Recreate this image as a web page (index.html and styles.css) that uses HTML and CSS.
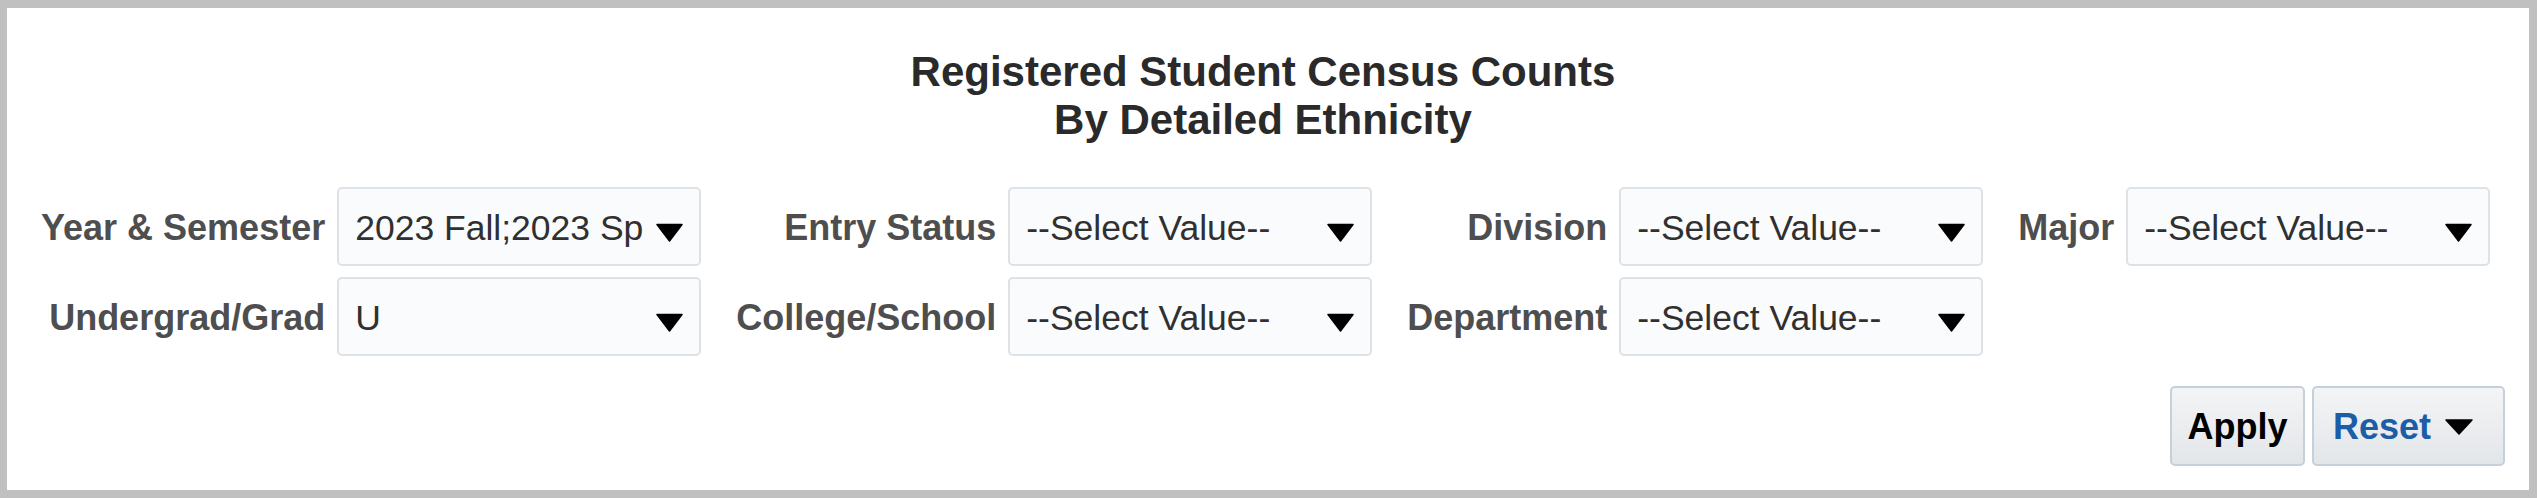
FILE: index.html
```html
<!DOCTYPE html>
<html>
<head>
<meta charset="utf-8">
<link rel="stylesheet" href="styles.css">
</head>
<body>
<div class="panel">
  <h1 class="title">Registered Student Census Counts<br>By Detailed Ethnicity</h1>
  <div class="prompts">
    <label class="lbl first">Year &amp; Semester</label>
    <div class="box"><span class="val">2023 Fall;2023 Sp</span><svg class="arrow" width="27" height="19" viewBox="0 0 27 19"><path d="M1 1.5 H26 L13.5 18 Z" fill="#000" stroke="#000" stroke-width="1.5" stroke-linejoin="round"/></svg></div>
    <label class="lbl">Entry Status</label>
    <div class="box"><span class="val">--Select Value--</span><svg class="arrow" width="27" height="19" viewBox="0 0 27 19"><path d="M1 1.5 H26 L13.5 18 Z" fill="#000" stroke="#000" stroke-width="1.5" stroke-linejoin="round"/></svg></div>
    <label class="lbl">Division</label>
    <div class="box"><span class="val">--Select Value--</span><svg class="arrow" width="27" height="19" viewBox="0 0 27 19"><path d="M1 1.5 H26 L13.5 18 Z" fill="#000" stroke="#000" stroke-width="1.5" stroke-linejoin="round"/></svg></div>
    <label class="lbl">Major</label>
    <div class="box"><span class="val">--Select Value--</span><svg class="arrow" width="27" height="19" viewBox="0 0 27 19"><path d="M1 1.5 H26 L13.5 18 Z" fill="#000" stroke="#000" stroke-width="1.5" stroke-linejoin="round"/></svg></div>

    <label class="lbl first">Undergrad/Grad</label>
    <div class="box"><span class="val">U</span><svg class="arrow" width="27" height="19" viewBox="0 0 27 19"><path d="M1 1.5 H26 L13.5 18 Z" fill="#000" stroke="#000" stroke-width="1.5" stroke-linejoin="round"/></svg></div>
    <label class="lbl">College/School</label>
    <div class="box"><span class="val">--Select Value--</span><svg class="arrow" width="27" height="19" viewBox="0 0 27 19"><path d="M1 1.5 H26 L13.5 18 Z" fill="#000" stroke="#000" stroke-width="1.5" stroke-linejoin="round"/></svg></div>
    <label class="lbl">Department</label>
    <div class="box"><span class="val">--Select Value--</span><svg class="arrow" width="27" height="19" viewBox="0 0 27 19"><path d="M1 1.5 H26 L13.5 18 Z" fill="#000" stroke="#000" stroke-width="1.5" stroke-linejoin="round"/></svg></div>
  </div>
  <div class="actions">
    <button class="btn apply">Apply</button>
    <button class="btn reset"><span class="reset-text">Reset</span><svg class="btn-arrow" width="28" height="16" viewBox="0 0 28 16"><path d="M1 1 H27 L14 15 Z" fill="#000" stroke="#000" stroke-width="1.5" stroke-linejoin="round"/></svg></button>
  </div>
</div>
</body>
</html>
```

FILE: styles.css
```css
html, body {
  margin: 0;
  padding: 0;
}
body {
  background: #c0c0c0;
  font-family: "Liberation Sans", Arial, sans-serif;
  width: 2537px;
  height: 498px;
  box-sizing: border-box;
  padding: 8px 8px 8px 7px;
}
.panel {
  background: #ffffff;
  height: 482px;
  box-sizing: border-box;
  padding-top: 40px;
}
.title {
  margin: 0;
  text-align: center;
  font-size: 42px;
  line-height: 48px;
  font-weight: bold;
  color: #2a2a2a;
  padding-right: 10px;
}
.prompts {
  display: grid;
  grid-template-columns: auto 364px auto 364px auto 364px auto 364px;
  grid-template-rows: 79px 79px;
  row-gap: 11px;
  justify-content: start;
  margin-top: 43px;
  padding-left: 34px;
  align-items: center;
}
.lbl {
  font-size: 36px;
  font-weight: bold;
  color: #4e4e4e;
  text-align: right;
  padding: 3px 12px 0 35px;
  white-space: nowrap;
}
.lbl.first {
  padding-left: 0;
}
.box {
  height: 79px;
  box-sizing: border-box;
  border: 2px solid #dde2e7;
  border-radius: 5px;
  background: #fafbfc;
  display: flex;
  align-items: center;
  justify-content: space-between;
  padding: 0 16px;
}
.val {
  font-size: 35.5px;
  color: #303030;
  padding-top: 3px;
  white-space: nowrap;
}
.arrow {
  margin-top: 12px;
  flex: none;
}
.actions {
  display: flex;
  justify-content: flex-end;
  gap: 7px;
  margin-top: 30px;
  padding-right: 24px;
}
.btn {
  height: 80px;
  box-sizing: border-box;
  border: 2px solid #c6d0da;
  border-radius: 5px;
  background: linear-gradient(#f3f4f6, #e3e6e9);
  font-family: "Liberation Sans", Arial, sans-serif;
  font-size: 36px;
  font-weight: bold;
  display: flex;
  align-items: center;
  margin: 0;
}
.apply {
  color: #000000;
  padding: 2px 0 0 0;
  width: 135px;
  justify-content: center;
}
.reset {
  color: #1b5ea7;
  width: 193px;
  padding: 2px 0 0 19px;
}
.btn-arrow {
  margin-left: 14px;
  flex: none;
}
```
